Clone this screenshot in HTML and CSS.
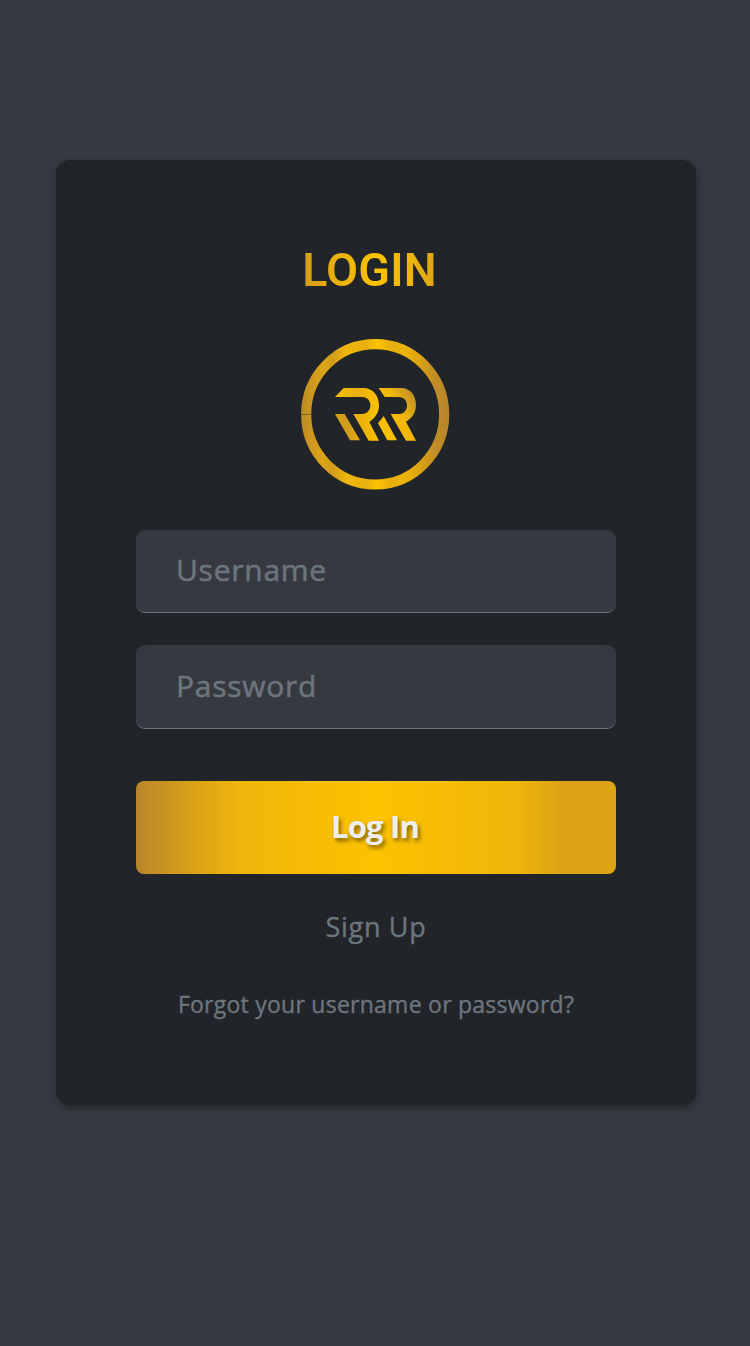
FILE: index.html
```html
<!DOCTYPE html>
<html lang="en">
<head>
<meta charset="utf-8">
<title>Login</title>
<link rel="stylesheet" href="styles.css">
</head>
<body>
<main class="card">
  <h1 class="title">LOGIN</h1>
  <svg class="logo" viewBox="30 24 450 456" aria-hidden="true">
    <defs>
      <linearGradient id="ring" gradientUnits="userSpaceOnUse" x1="33" y1="0" x2="477" y2="0">
        <stop offset="0" stop-color="#bd8a27"/>
        <stop offset=".08" stop-color="#cf991e"/>
        <stop offset=".15" stop-color="#dda516"/>
        <stop offset=".21" stop-color="#d29c1c"/>
        <stop offset=".31" stop-color="#efb60b"/>
        <stop offset=".44" stop-color="#e8b00f"/>
        <stop offset=".52" stop-color="#fdc200"/>
        <stop offset=".61" stop-color="#e6ae10"/>
        <stop offset=".7" stop-color="#eeb50b"/>
        <stop offset=".8" stop-color="#dca415"/>
        <stop offset=".91" stop-color="#c08c26"/>
        <stop offset="1" stop-color="#b8862b"/>
      </linearGradient>
      <linearGradient id="first" gradientUnits="userSpaceOnUse" x1="135" y1="0" x2="267" y2="0">
        <stop offset="0" stop-color="#f8be04"/>
        <stop offset=".55" stop-color="#e9b00e"/>
        <stop offset="1" stop-color="#fdc200"/>
      </linearGradient>
      <linearGradient id="second" gradientUnits="userSpaceOnUse" x1="275" y1="260" x2="378" y2="205">
        <stop offset="0" stop-color="#fdc200"/>
        <stop offset=".5" stop-color="#efb60b"/>
        <stop offset="1" stop-color="#c28e25"/>
      </linearGradient>
      <linearGradient id="leg">
        <stop offset="0" stop-color="#d9a217"/>
        <stop offset=".5" stop-color="#cf9a1e"/>
        <stop offset="1" stop-color="#e9b00e"/>
      </linearGradient>
    </defs>
    <ellipse cx="255.500" cy="253" rx="207" ry="210.500" fill="none" stroke="url(#ring)" stroke-width="30.500"/>
    <path d="M33 253.500H64" stroke="#6f5727" stroke-width="2.500"/>
    <path fill="url(#first)" d="M135 201L161 174H220C250 174 267 198 267 226C267 248 256 264 238 276L267 332H236L190 252H216C232 252 241 240 241 226C241 211 231 201 214 201Z"/>
    <path fill="url(#leg)" d="M135 252H164L210 331H180Z"/>
    <path fill="url(#second)" d="M266 174H334C362 174 378 198 378 224C378 248 367 263 348 275L378 332H348L302 252H327C343 252 351 240 351 226C351 211 341 201 325 201H284Z"/>
    <path fill="#f9bf03" d="M281 258L321 331H292L264 280Z"/>
  </svg>
  <form class="form">
    <input class="field" type="text" placeholder="Username" aria-label="Username">
    <input class="field field-password" type="password" placeholder="Password" aria-label="Password">
    <button class="submit" type="button">Log In</button>
  </form>
  <a class="signup">Sign Up</a>
  <a class="forgot">Forgot your username or password?</a>
</main>
</body>
</html>
```
FILE: styles.css
```css
* { box-sizing: border-box; }

body {
  margin: 0;
  min-height: 1346px;
  padding: 160px 54px 0 56px;
  background: #363940;
  font-family: "Open Sans", sans-serif;
}

.card {
  display: flex;
  flex-direction: column;
  align-items: center;
  width: 640px;
  height: 945px;
  padding: 80px;
  border-radius: 14px;
  background: #212428;
  box-shadow: 1px 3px 6px rgba(25, 28, 30, .6);
}

.title {
  margin: 0 13px 0 0;
  height: 60px;
  font: 600 46.5px/60px Roboto, sans-serif;
  letter-spacing: .2px;
  color: transparent;
  background: linear-gradient(90deg, #d49d1b, #e9b00e 25%, #fdc200 55%, #efb60b 78%, #dca415);
  background-clip: text;
}

.logo {
  width: 150px;
  height: 152px;
  margin: 38px 2px 39px 0;
}

.form {
  display: flex;
  flex-direction: column;
  width: 480px;
}

.field {
  height: 83px;
  margin-top: 1px;
  padding: 0 40px 3px;
  border: 0;
  border-bottom: 1px solid #6c757d;
  border-radius: 9px;
  background: #363a40;
  font: 30px "Open Sans", sans-serif;
  letter-spacing: .75px;
  color: #eee;
}

.field::placeholder {
  color: #6c757d;
  opacity: 1;
  -webkit-text-stroke: .5px #6c757d;
}

.field-password {
  height: 84px;
  margin-top: 32px;
}

.submit {
  height: 93px;
  margin-top: 52px;
  padding: 0 2px 3px 0;
  border: 0;
  border-radius: 8px;
  background: linear-gradient(90deg, #b8862b, #dca415 13%, #efb60b 22%, #fdc200 50%, #efb60b 79%, #dca415 88%);
  color: #eee;
  font: 700 31px "Open Sans", sans-serif;
  letter-spacing: -.8px;
  text-shadow: 2px 3px 4px rgba(0, 0, 0, .5);
}

.signup,
.forgot {
  color: #6c757d;
  white-space: nowrap;
  -webkit-text-stroke: .4px #6c757d;
}

.signup {
  margin-top: 33px;
  font-size: 27px;
  line-height: 40px;
  letter-spacing: .7px;
}

.forgot {
  margin-top: 39px;
  font-size: 23px;
  line-height: 36px;
  letter-spacing: .25px;
}
```
